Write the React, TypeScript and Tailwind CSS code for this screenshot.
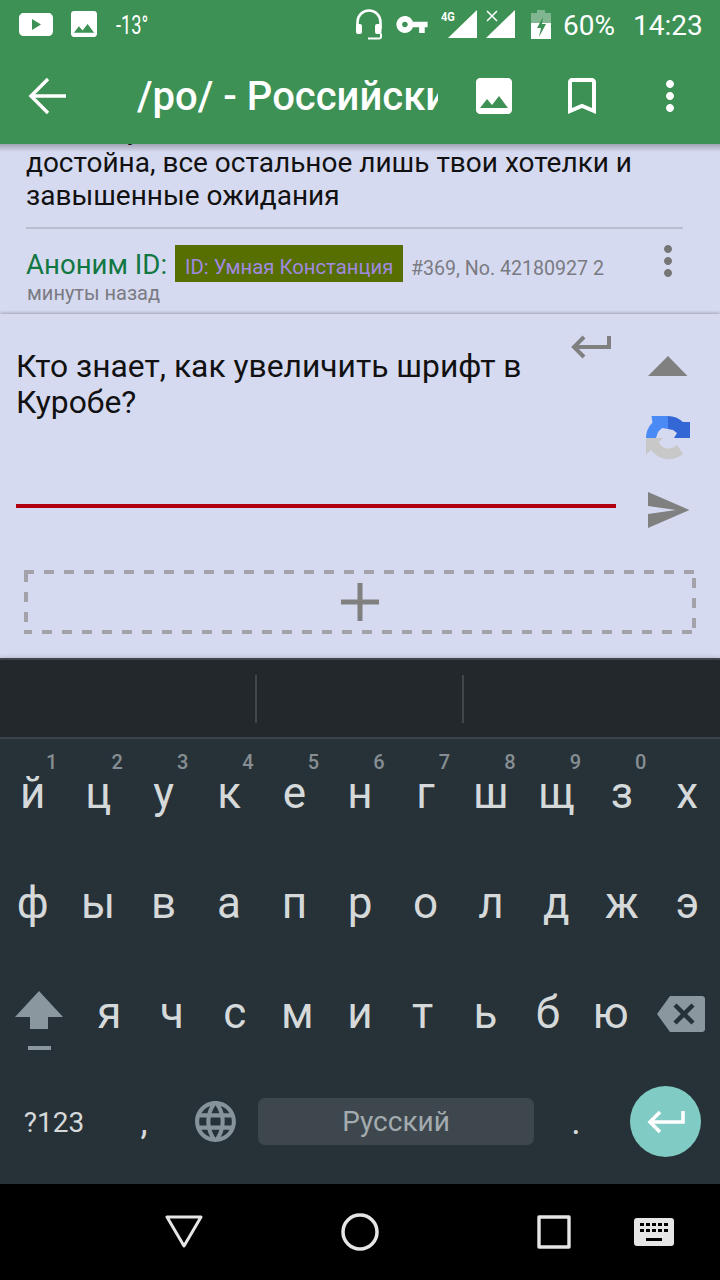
import React from 'react';

const ROW1 = [
  ['й', '1'], ['ц', '2'], ['у', '3'], ['к', '4'], ['е', '5'], ['н', '6'],
  ['г', '7'], ['ш', '8'], ['щ', '9'], ['з', '0'], ['х', ''],
];
const ROW2 = ['ф', 'ы', 'в', 'а', 'п', 'р', 'о', 'л', 'д', 'ж', 'э'];
const ROW3 = ['я', 'ч', 'с', 'м', 'и', 'т', 'ь', 'б', 'ю'];

const IMAGE_PATH = 'M21 19V5c0-1.1-.9-2-2-2H5c-1.1 0-2 .9-2 2v14c0 1.1.9 2 2 2h14c1.1 0 2-.9 2-2zM8.5 13.5l2.5 3.01L14.5 12l4.5 6H5l3.5-4.5z';
const KEBAB_PATH = 'M12 8c1.1 0 2-.9 2-2s-.9-2-2-2-2 .9-2 2 .9 2 2 2zm0 2c-1.1 0-2 .9-2 2s.9 2 2 2 2-.9 2-2-.9-2-2-2zm0 6c-1.1 0-2 .9-2 2s.9 2 2 2 2-.9 2-2-.9-2-2-2z';
const GLOBE_PATH = 'M11.99 2C6.47 2 2 6.48 2 12s4.47 10 9.99 10C17.52 22 22 17.52 22 12S17.52 2 11.99 2zm6.93 6h-2.95c-.32-1.25-.78-2.45-1.38-3.56 1.84.63 3.37 1.91 4.33 3.56zM12 4.04c.83 1.2 1.48 2.53 1.91 3.96h-3.82c.43-1.43 1.08-2.76 1.91-3.96zM4.26 14C4.1 13.36 4 12.69 4 12s.1-1.36.26-2h3.38c-.08.66-.14 1.32-.14 2 0 .68.06 1.34.14 2H4.26zm.82 2h2.95c.32 1.25.78 2.45 1.38 3.56-1.84-.63-3.37-1.9-4.33-3.56zm2.95-8H5.08c.96-1.66 2.49-2.93 4.33-3.56C8.81 5.55 8.35 6.75 8.03 8zM12 19.96c-.83-1.2-1.48-2.53-1.91-3.96h3.82c-.43 1.43-1.08 2.76-1.91 3.96zM14.34 14H9.66c-.09-.66-.16-1.32-.16-2 0-.68.07-1.35.16-2h4.68c.09.65.16 1.32.16 2 0 .68-.07 1.34-.16 2zm.25 5.56c.6-1.11 1.06-2.31 1.38-3.56h2.95c-.96 1.65-2.49 2.93-4.33 3.56zM16.36 14c.08-.66.14-1.32.14-2 0-.68-.06-1.34-.14-2h3.38c.16.64.26 1.31.26 2s-.1 1.36-.26 2h-3.38z';

const MaterialIcon: React.FC<{ d: string; className: string }> = ({ d, className }) => (
  <svg viewBox="0 0 24 24" className={className} fill="currentColor">
    <path d={d} />
  </svg>
);

const StatusBar: React.FC = () => (
  <div className="h-[48px] flex items-center text-white shrink-0">
    <svg viewBox="0 0 34 23" className="w-[34px] h-[23px] ml-[19px] shrink-0">
      <path fill="#fff" fillRule="evenodd" d="M5 0h24c3 0 5 2 5 5v13c0 3-2 5-5 5H5c-3 0-5-2-5-5V5c0-3 2-5 5-5zM13 6v11l9-5.500z" />
    </svg>
    <svg viewBox="3 3 18 18" className="w-[26px] h-[26px] ml-[18px] shrink-0" fill="currentColor">
      <path d={IMAGE_PATH} />
    </svg>
    <span className="ml-[19px] w-[36px] pt-[2px] text-[25px] leading-none origin-left scale-x-[0.73] whitespace-nowrap">-13°</span>
    <svg viewBox="0 0 28 31" className="w-[28px] h-[31px] ml-[203px] shrink-0" fill="none" stroke="#fff">
      <path strokeWidth="2.600" d="M2.500 20V13a11.500 11.500 0 0 1 23 0v7" />
      <rect x="1" y="15" width="6" height="10" rx="2" fill="#fff" stroke="none" />
      <rect x="20" y="15" width="6.500" height="10" rx="2" fill="#fff" stroke="none" />
      <path strokeWidth="2" d="M13 29.500h11c1 0 2-1 2-2v-3" />
    </svg>
    <svg viewBox="1 6 22 12" className="w-[32px] h-[17px] ml-[13px] shrink-0" fill="currentColor">
      <path d="M12.650 10C11.830 7.670 9.610 6 7 6c-3.310 0-6 2.690-6 6s2.690 6 6 6c2.610 0 4.830-1.670 5.650-4H17v4h4v-4h2v-4H12.650zM7 14c-1.100 0-2-.9-2-2s.9-2 2-2 2 .9 2 2-.9 2-2 2z" />
    </svg>
    <div className="relative w-[36px] h-[30px] ml-[13px] shrink-0">
      <span className="absolute left-0 top-[1px] text-[13px] leading-none font-bold origin-left scale-x-[0.85]">4G</span>
      <svg viewBox="0 0 29 28" className="absolute left-[7px] top-[1px] w-[29px] h-[28px]" fill="#fff">
        <path d="M29 0v28H0z" />
      </svg>
    </div>
    <svg viewBox="0 0 29 28" className="w-[29px] h-[28px] ml-[9px] shrink-0" fill="#fff">
      <path d="M29 0v28H0z" />
      <path d="M1 1l10 10M11 1L1 11" stroke="#fff" strokeWidth="1.500" fill="none" />
    </svg>
    <svg viewBox="0 0 20 29" className="w-[20px] h-[29px] ml-[16px] shrink-0">
      <path fill="#fff" fillOpacity="0.35" d="M6 0h8v3h6v10H0V3h6z" />
      <path fill="#fff" d="M0 13h20v16H0z" />
      <path fill="#3d9155" d="M12 7l-6 11h4l-2 9 7-13h-4l1-7z" />
    </svg>
    <span className="ml-[12px] pt-[3px] text-[28px] leading-none whitespace-nowrap">60%</span>
    <span className="ml-[18px] pt-[3px] text-[28px] leading-none whitespace-nowrap">14:23</span>
  </div>
);

const Toolbar: React.FC = () => (
  <div className="h-[96px] flex items-center text-white shrink-0">
    <svg viewBox="0 0 40 40" className="w-[40px] h-[40px] ml-[28px]" fill="none" stroke="#fff" strokeWidth="3.400">
      <path d="M38 20H4M20 3L3 20l17 17" />
    </svg>
    <div className="ml-[69px] w-[301px] pt-[2px] overflow-hidden whitespace-nowrap text-[40px] leading-[46px] font-medium">
      /po/ - Российский
    </div>
    <MaterialIcon d={IMAGE_PATH} className="w-[48px] h-[48px] ml-[32px]" />
    <svg viewBox="0 0 24 24" className="w-[48px] h-[48px] ml-[40px]" fill="currentColor">
      <path d="M17 3H7c-1.100 0-1.990.9-1.990 2L5 21l7-3 7 3V5c0-1.100-.9-2-2-2zm0 15l-5-2.180L7 18V5h10v13z" />
    </svg>
    <MaterialIcon d={KEBAB_PATH} className="w-[48px] h-[48px] ml-[40px]" />
  </div>
);

const Post: React.FC = () => (
  <div className="relative h-[170px] overflow-hidden flex flex-col justify-end bg-[#d6daf0] shrink-0">
    <div className="absolute inset-x-0 top-0 h-[8px] bg-gradient-to-b from-[#00000040] to-transparent" />
    <div className="px-[26px] text-[28px] leading-[33px] text-[#111] shrink-0">
      <div className="whitespace-nowrap">Она, не у них она не такая и вот, это</div>
      <div className="whitespace-nowrap">достойна, все остальное лишь твои хотелки и</div>
      <div className="whitespace-nowrap">завышенные ожидания</div>
    </div>
    <div className="mx-[26px] mt-[15px] w-[657px] h-[2px] bg-[#b9bdd0] shrink-0" />
    <div className="relative h-[85px] pl-[26px] pt-[16px] shrink-0">
      <div className="flex items-center h-[37px] whitespace-nowrap">
        <span className="w-[149px] pt-[2px] text-[27.6px] leading-none text-[#117743]">Аноним ID:</span>
        <span className="h-[37px] w-[228px] bg-[#566f00] text-[#a08ae0] text-[20.300px] pl-[10px] pt-[9px] leading-[26px]">ID: Умная Констанция</span>
        <span className="ml-[8px] text-[19.600px] leading-none pt-[10px] text-[#7a7a82]">#369, No. 42180927 2</span>
      </div>
      <div className="text-[20px] leading-[22px] pl-[1px] text-[#7a7a82]">минуты назад</div>
      <MaterialIcon d={KEBAB_PATH} className="absolute left-[644px] top-[8px] w-[48px] h-[48px] text-[#757575]" />
    </div>
  </div>
);

const Composer: React.FC = () => (
  <div className="relative h-[344px] bg-[#d6daf0] shadow-[0_-1px_3px_#00000040] shrink-0">
    <div className="flex h-[256px]">
      <div className="relative w-[632px] pl-[16px]">
        <div className="pt-[34px] h-[190px] text-[#111] text-[31.800px] leading-[36px] whitespace-nowrap">
          Кто знает, как увеличить шрифт в<br />Куробе?
        </div>
        <div className="w-[600px] h-[4px] bg-[#b00010]" />
        <svg viewBox="0 0 40 24" className="absolute left-[571px] top-[21px] w-[40px] h-[24px]" fill="none" stroke="#808080" strokeWidth="4">
          <path d="M38 1v11H3M13 2L3 12l10 10" />
        </svg>
      </div>
      <div className="relative flex-1">
        <svg viewBox="0 0 40 20" className="absolute left-[16px] top-[42px] w-[40px] h-[20px]" fill="#808080">
          <path d="M20 0l19.500 20H0z" />
        </svg>
        <svg viewBox="0 0 44 44" className="absolute left-[14px] top-[102px] w-[44px] h-[44px]">
          <path fill="#4a8af4" d="M0 22A22 22 0 0 1 6.500 6.500L5.500 0H22v13l-6-1-4 4-2 6z" />
          <path fill="#3367d6" d="M22 0a22 22 0 0 1 15 6h7v16H28l3-5-4-3-5-1z" />
          <path fill="#c8c8c8" d="M0 22h17l-4 4c2 7 12 9 18 3l6 9A22 22 0 0 1 5 34l-5 5z" />
        </svg>
        <svg viewBox="0 0 42 36" className="absolute left-[16px] top-[178px] w-[42px] h-[36px]" fill="#808080">
          <path d="M0 0l41.500 18L0 36V22l28-4-28-4z" />
        </svg>
      </div>
    </div>
    <div className="relative mx-[24px] h-[64px] w-[672px] flex items-center justify-center">
      <svg viewBox="0 0 672 64" className="absolute inset-0 w-[672px] h-[64px]" fill="none" stroke="#a2a2a8" strokeWidth="4" strokeDasharray="10 10">
        <path d="M0 2H670" />
        <path d="M2 2V60" />
        <path d="M670 8V58" />
        <path d="M0 62H668" strokeDashoffset="2" />
      </svg>
      <svg viewBox="0 0 38 38" className="w-[38px] h-[38px]" fill="#808080">
        <path d="M16.500 0h5v16.500H38v5H21.500V38h-5V21.500H0v-5h16.500z" />
      </svg>
    </div>
  </div>
);

const Keyboard: React.FC = () => (
  <div className="relative h-[526px] shrink-0 flex flex-col text-[#d6d9da] shadow-[0_-2px_3px_#00000018]">
    <div className="h-[81px] bg-[#22282c] border-t-2 border-t-[#3e454a] border-b-2 border-b-[#3a444a] flex items-center shrink-0">
      <div className="ml-[255px] w-[2px] h-[48px] bg-[#41484d]" />
      <div className="ml-[205px] w-[2px] h-[48px] bg-[#41484d]" />
    </div>
    <div className="flex-1 bg-[#263238] flex flex-col">
      <div className="grid grid-cols-11 h-[110px]">
        {ROW1.map(([k, hint]) => (
          <div key={k} className="relative flex items-center justify-center pb-[2px] text-[44px] leading-none">
            {k}
            <span className="absolute left-[46px] top-[12px] text-[20px] leading-[22px] font-medium text-[#868e93]">{hint}</span>
          </div>
        ))}
      </div>
      <div className="grid grid-cols-11 h-[110px]">
        {ROW2.map((k) => (
          <div key={k} className="flex items-center justify-center pb-[2px] text-[44px] leading-none">{k}</div>
        ))}
      </div>
      <div className="grid grid-cols-[78px_repeat(9,1fr)_78px] h-[110px]">
        <div className="relative">
          <svg viewBox="0 0 48 38" className="absolute left-[15px] top-[32px] w-[48px] h-[38px]" fill="#8a979e">
            <path d="M24 0l24 26H33v12H15V26H0z" />
          </svg>
          <div className="absolute left-[28px] top-[87px] w-[23px] h-[4px] bg-[#8a979e]" />
        </div>
        {ROW3.map((k) => (
          <div key={k} className="flex items-center justify-center pb-[2px] text-[44px] leading-none">{k}</div>
        ))}
        <div className="flex items-center justify-start pl-[15px]">
          <svg viewBox="0 0 48 36" className="w-[48px] h-[36px]">
            <path fill="#8a979e" d="M13 0h32c1.700 0 3 1.300 3 3v30c0 1.700-1.300 3-3 3H13L0 18z" />
            <path fill="none" stroke="#263238" strokeWidth="4.500" d="M18 9l18 18M36 9L18 27" />
          </svg>
        </div>
      </div>
      <div className="flex items-center h-[114px] pb-[9px]">
        <div className="w-[108px] pt-[2px] text-center text-[28px] leading-none">?123</div>
        <div className="w-[72px] text-center text-[36px] leading-none">,</div>
        <div className="w-[70px] flex justify-center">
          <MaterialIcon d={GLOBE_PATH} className="w-[49px] h-[49px] text-[#87939a]" />
        </div>
        <div className="ml-[8px] w-[276px] h-[47px] rounded-[7px] bg-[#3d474d] flex items-center justify-center text-[28px] text-[#a3abaf]">Русский</div>
        <div className="ml-[6px] w-[72px] text-center text-[36px] leading-none">.</div>
        <div className="ml-[18px] w-[71px] h-[71px] rounded-full bg-[#80cbc4] flex items-center justify-center">
          <svg viewBox="0 0 40 24" className="w-[40px] h-[24px]" fill="none" stroke="#fff" strokeWidth="3.600">
            <path d="M37 1v11H4M14 2L4 12l10 10" />
          </svg>
        </div>
      </div>
    </div>
  </div>
);

const NavBar: React.FC = () => (
  <div className="flex-1 bg-black relative">
    <svg viewBox="0 0 38 33" className="absolute left-[165px] top-[31px] w-[38px] h-[33px]" fill="none" stroke="#e6e6e6" strokeWidth="3" strokeLinejoin="round">
      <path d="M2 2h34L19 31z" />
    </svg>
    <svg viewBox="0 0 38 38" className="absolute left-[341px] top-[29px] w-[38px] h-[38px]" fill="none" stroke="#e6e6e6" strokeWidth="3.500">
      <circle cx="19" cy="19" r="17" />
    </svg>
    <svg viewBox="0 0 34 34" className="absolute left-[537px] top-[31px] w-[34px] h-[34px]" fill="none" stroke="#e6e6e6" strokeWidth="3.400" strokeLinejoin="round">
      <path d="M2 2h30v30H2z" />
    </svg>
    <svg viewBox="0 0 40 28" className="absolute left-[634px] top-[34px] w-[40px] h-[28px]">
      <rect width="40" height="28" rx="3" fill="#e6e6e6" />
      <path fill="#000" d="M6 5h4v3H6zM12 5h4v3h-4zM18 5h4v3h-4zM24 5h4v3h-4zM30 5h4v3h-4zM6 11h4v3H6zM12 11h4v3h-4zM18 11h4v3h-4zM24 11h4v3h-4zM30 11h4v3h-4zM12 20h16v3H12z" />
    </svg>
  </div>
);

export default function App() {
  return (
    <div className="relative w-[720px] h-[1280px] overflow-hidden flex flex-col font-[Roboto,sans-serif] bg-black">
      <div className="relative z-10 bg-[#3d9155]">
        <StatusBar />
        <Toolbar />
      </div>
      <Post />
      <Composer />
      <Keyboard />
      <NavBar />
    </div>
  );
}
